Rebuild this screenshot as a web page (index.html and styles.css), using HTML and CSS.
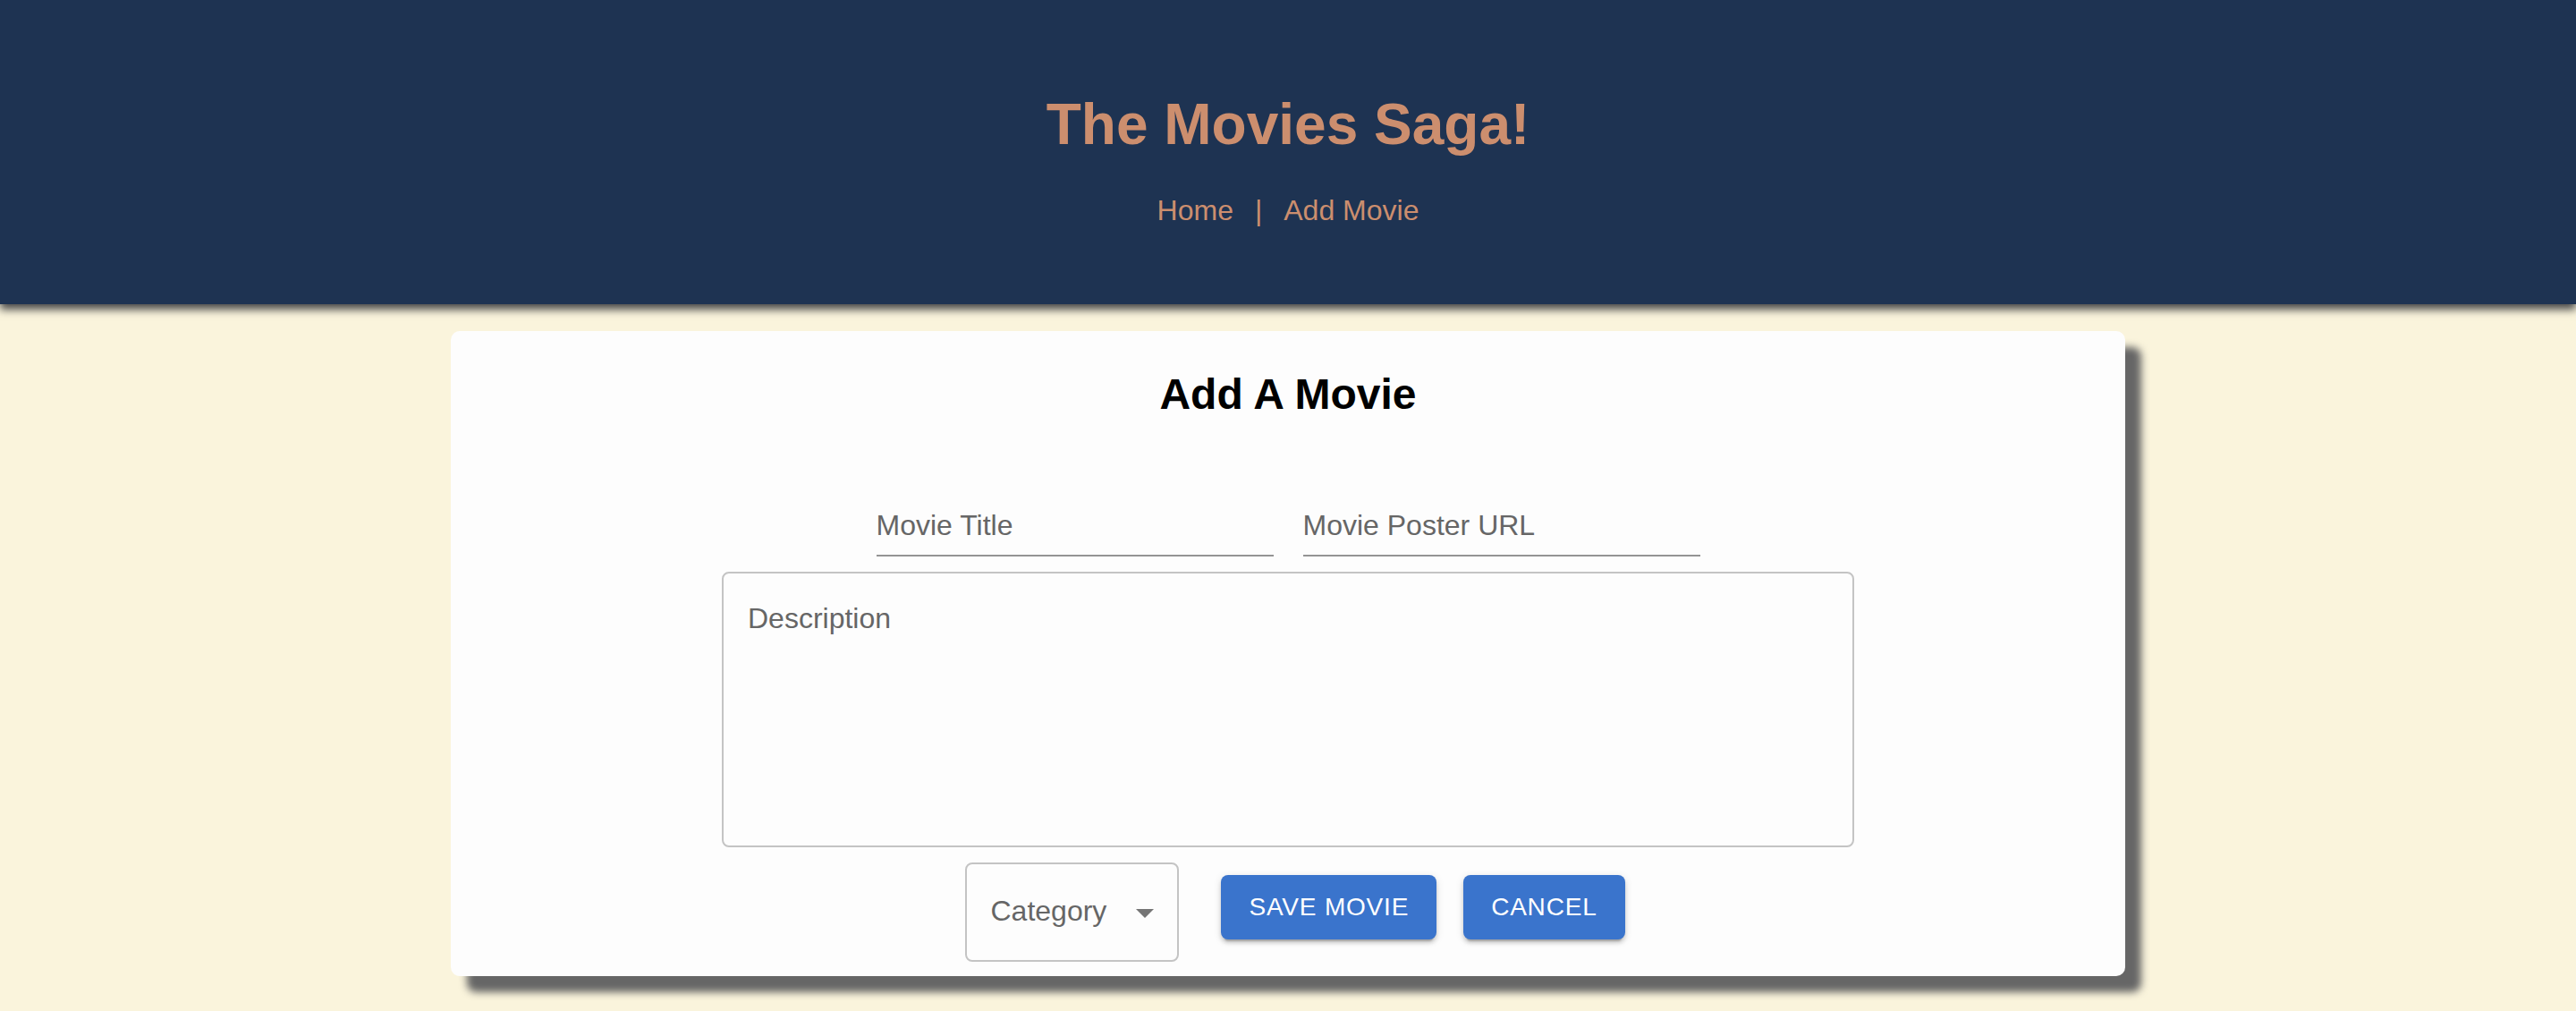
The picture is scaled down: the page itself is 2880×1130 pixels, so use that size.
FILE: index.html
```html
<!DOCTYPE html>
<html lang="en">
<head>
<meta charset="utf-8">
<title>The Movies Saga!</title>
<link rel="stylesheet" href="styles.css">
</head>
<body>
<header class="site-header">
  <h1 class="site-title">The Movies Saga!</h1>
  <nav class="site-nav">
    <a class="nav-link" href="#">Home</a>
    <span class="nav-sep">|</span>
    <a class="nav-link" href="#">Add Movie</a>
  </nav>
</header>
<main class="page">
  <section class="card">
    <h2 class="card-title">Add A Movie</h2>
    <div class="field-row">
      <div class="field"><span class="field-label">Movie Title</span></div>
      <div class="field"><span class="field-label">Movie Poster URL</span></div>
    </div>
    <div class="textarea"><span class="field-label">Description</span></div>
    <div class="action-row">
      <div class="select">
        <span class="select-label">Category</span>
        <svg class="select-icon" viewBox="0 0 24 24" width="48" height="48"><path d="M7 10l5 5 5-5z" fill="#757575"/></svg>
      </div>
      <button class="btn btn-save">SAVE MOVIE</button>
      <button class="btn btn-cancel">CANCEL</button>
    </div>
  </section>
</main>
</body>
</html>
```
FILE: styles.css
```css
html, body {
  margin: 0;
  padding: 0;
}
body {
  background: #faf4dc;
  font-family: "Liberation Sans", Arial, Helvetica, sans-serif;
  min-height: 1130px;
}
.site-header {
  background: #1e3352;
  padding: 102px 0 86px;
  box-shadow: 0 6px 9px #4a4a4a;
  display: flex;
  flex-direction: column;
  align-items: center;
  position: relative;
  z-index: 1;
}
.site-title {
  margin: 0;
  font-size: 64px;
  font-weight: 700;
  color: #cc8e6e;
  line-height: normal;
}
.site-nav {
  margin-top: 41px;
  display: flex;
  gap: 24px;
  font-size: 32px;
  color: #cc8e6e;
  line-height: normal;
}
.nav-link {
  color: #cc8e6e;
  text-decoration: none;
}
.page {
  padding-top: 30px;
}
.card {
  width: 1872px;
  margin: 0 auto;
  background: #fdfdfd;
  border-radius: 10px;
  box-shadow: 18px 18px 8px #666;
  padding: 43px 0 16px;
  box-sizing: border-box;
}
.card-title {
  margin: 0;
  text-align: center;
  font-size: 48px;
  font-weight: 700;
  color: #000;
  line-height: normal;
}
.field-row {
  margin-top: 58px;
  display: flex;
  justify-content: center;
  gap: 33px;
}
.field {
  width: 444px;
  height: 96px;
  box-sizing: border-box;
  border-bottom: 2px solid #949494;
  display: flex;
  align-items: flex-end;
  padding-bottom: 10px;
}
.field-label {
  font-size: 32px;
  line-height: 46px;
  color: #666;
}
.textarea {
  width: 1266px;
  height: 308px;
  box-sizing: border-box;
  margin: 17px auto 0;
  border: 2px solid #c4c4c4;
  border-radius: 8px;
  padding: 27px 27px;
}
.action-row {
  margin-top: 17px;
  padding-left: 16px;
  display: flex;
  justify-content: center;
  align-items: flex-start;
}
.select {
  width: 239px;
  height: 111px;
  box-sizing: border-box;
  border: 2px solid #c4c4c4;
  border-radius: 8px;
  display: flex;
  align-items: center;
  padding: 0 12px 4px 26px;
  margin-right: 47px;
}
.select-label {
  font-size: 32px;
  line-height: 46px;
  color: #666;
}
.select-icon {
  margin-left: auto;
  margin-top: 4px;
  display: block;
}
.btn {
  margin-top: 14px;
  border: none;
  border-radius: 8px;
  background: #3a74cc;
  color: #fff;
  font-family: "Liberation Sans", Arial, Helvetica, sans-serif;
  font-size: 28px;
  letter-spacing: 0.8px;
  line-height: 48px;
  padding: 12px 31px;
  box-shadow: 0 6px 2px -4px rgba(0,0,0,0.2), 0 4px 4px 0 rgba(0,0,0,0.14), 0 2px 10px 0 rgba(0,0,0,0.12);
  cursor: pointer;
}
.btn-save {
  margin-right: 30px;
}
```
